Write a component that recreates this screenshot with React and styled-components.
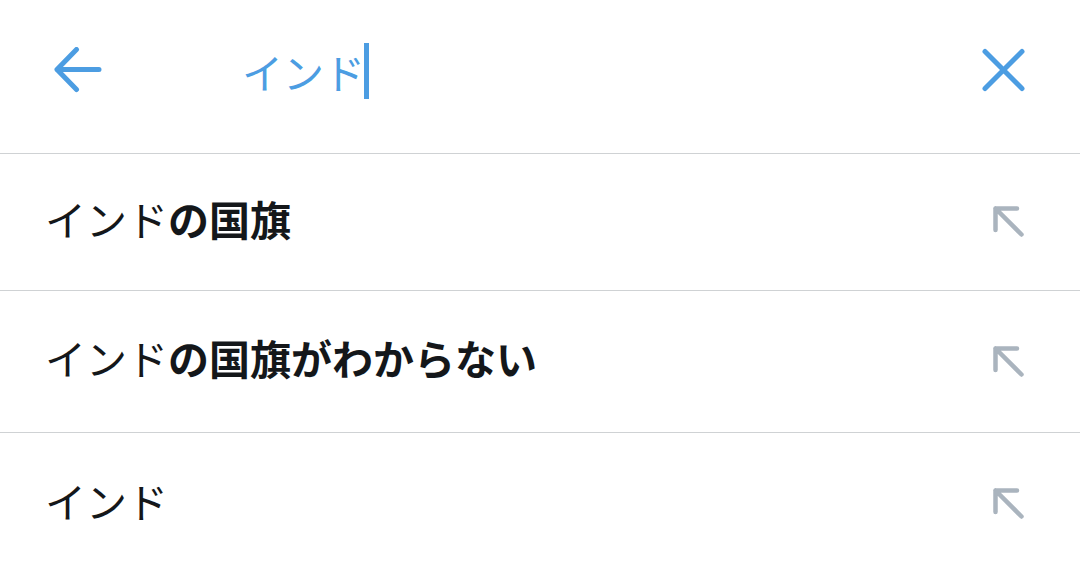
import React from 'react'
import styled, {createGlobalStyle} from 'styled-components'

const Global = createGlobalStyle`
  html, body { margin: 0; padding: 0; background: #fff; }
  body {
    font-family: "Noto Sans CJK JP", "Noto Sans", sans-serif;
    overflow: hidden;
  }
`

const BLUE = '#4c9de2'

const Page = styled.div`
  width: 1080px;
  height: 566px;
  background: #fff;
  overflow: hidden;
`

const Header = styled.header`
  height: 154px;
  display: flex;
  align-items: center;
  padding: 0 54px 11px 54px;
  box-sizing: border-box;
  border-bottom: 1px solid #cfd2d4;
`

const IconButton = styled.button`
  border: 0;
  background: none;
  padding: 0;
  display: flex;
  align-items: center;
  justify-content: center;
  width: 48px;
  height: 48px;
  cursor: pointer;
`

const Query = styled.div`
  flex: 1;
  display: flex;
  align-items: center;
  padding-left: 140px;
  font-size: 41px;
  color: ${BLUE};
  line-height: 1;
`

const Caret = styled.span`
  display: inline-block;
  width: 5px;
  height: 56px;
  margin-left: -1px;
  background: ${BLUE};
`

const List = styled.ul`
  list-style: none;
  margin: 0;
  padding: 0;
`

const Row = styled.li`
  height: ${p => p.$h}px;
  display: flex;
  align-items: center;
  justify-content: space-between;
  padding: 0 54px 5px 45px;
  box-sizing: border-box;
  border-bottom: 1px solid #cfd2d4;
  font-size: 41px;
  color: #14171a;
  &:last-child { border-bottom: 0; }
`

const Label = styled.span`
  position: relative;
  top: -2px;
`

const Typed = styled.span`
  font-weight: 400;
`

const Rest = styled.span`
  font-weight: 700;
`

const IconSlot = styled.span`
  display: flex;
  margin-top: 5px;
`

const BackIcon = () => (
  <svg width="48" height="48" viewBox="0 0 48 48" fill="none" stroke={BLUE} strokeWidth="5" strokeLinecap="round" strokeLinejoin="round">
    <path d="M3 22.5h42M22.5 2.5 3 22.5l19.5 20"/>
  </svg>
)

const CloseIcon = () => (
  <svg width="48" height="48" viewBox="0 0 48 48" fill="none" stroke={BLUE} strokeWidth="5" strokeLinecap="round">
    <path d="M7 4.5l37 37M44 4.5l-37 37"/>
  </svg>
)

const FillIcon = () => (
  <svg width="34" height="34" viewBox="0 0 34 34" fill="none" stroke="#aab4be" strokeWidth="4.5" strokeLinecap="round" strokeLinejoin="round">
    <path d="M3.5 25V3.5H25M3.5 3.5l26 26"/>
  </svg>
)

const suggestions = [
  {rest: 'の国旗', h: 137},
  {rest: 'の国旗がわからない', h: 142},
  {rest: '', h: 142},
]

export default function App() {
  return (
    <Page>
      <Global/>
      <Header>
        <IconButton aria-label="戻る"><BackIcon/></IconButton>
        <Query>インド<Caret/></Query>
        <IconButton aria-label="クリア"><CloseIcon/></IconButton>
      </Header>
      <List>
        {suggestions.map((s, i) => (
          <Row key={i} $h={s.h}>
            <Label><Typed>インド</Typed><Rest>{s.rest}</Rest></Label>
            <IconSlot><FillIcon/></IconSlot>
          </Row>
        ))}
      </List>
    </Page>
  )
}
